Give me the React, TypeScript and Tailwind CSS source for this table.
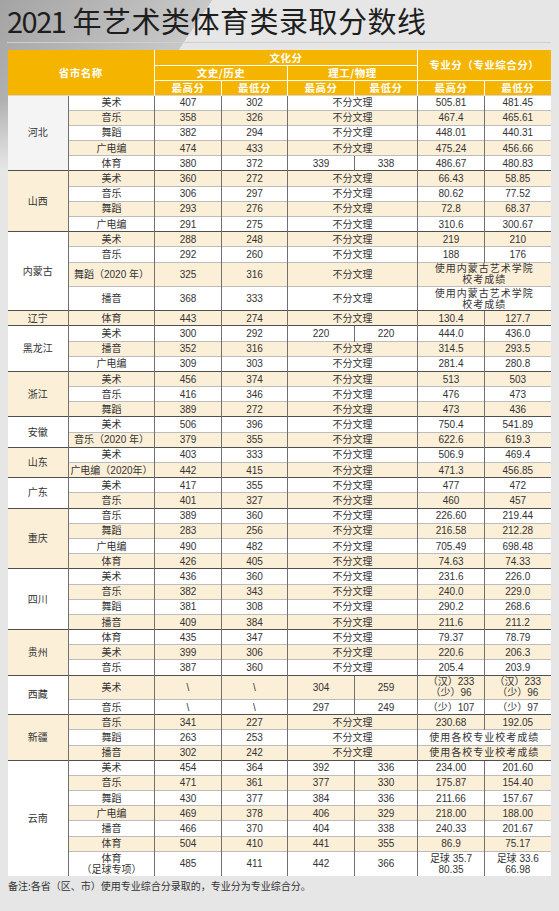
type Row = [string, string, string, string | null, string | null, string, string | null];
type Group = { p: string; rows: Row[] };

const groups: Group[] = [
  {
    p: "河北",
    rows: [
      ["美术", "407", "302", null, null, "505.81", "481.45"],
      ["音乐", "358", "326", null, null, "467.4", "465.61"],
      ["舞蹈", "382", "294", null, null, "448.01", "440.31"],
      ["广电编", "474", "433", null, null, "475.24", "456.66"],
      ["体育", "380", "372", "339", "338", "486.67", "480.83"],
    ],
  },
  {
    p: "山西",
    rows: [
      ["美术", "360", "272", null, null, "66.43", "58.85"],
      ["音乐", "306", "297", null, null, "80.62", "77.52"],
      ["舞蹈", "293", "276", null, null, "72.8", "68.37"],
      ["广电编", "291", "275", null, null, "310.6", "300.67"],
    ],
  },
  {
    p: "内蒙古",
    rows: [
      ["美术", "288", "248", null, null, "219", "210"],
      ["音乐", "292", "260", null, null, "188", "176"],
      ["舞蹈（2020 年）", "325", "316", null, null, "使用内蒙古艺术学院\n校考成绩", null],
      ["播音", "368", "333", null, null, "使用内蒙古艺术学院\n校考成绩", null],
    ],
  },
  { p: "辽宁", rows: [["体育", "443", "274", null, null, "130.4", "127.7"]] },
  {
    p: "黑龙江",
    rows: [
      ["美术", "300", "292", "220", "220", "444.0", "436.0"],
      ["播音", "352", "316", null, null, "314.5", "293.5"],
      ["广电编", "309", "303", null, null, "281.4", "280.8"],
    ],
  },
  {
    p: "浙江",
    rows: [
      ["美术", "456", "374", null, null, "513", "503"],
      ["音乐", "416", "346", null, null, "476", "473"],
      ["舞蹈", "389", "272", null, null, "473", "436"],
    ],
  },
  {
    p: "安徽",
    rows: [
      ["美术", "506", "396", null, null, "750.4", "541.89"],
      ["音乐（2020 年）", "379", "355", null, null, "622.6", "619.3"],
    ],
  },
  {
    p: "山东",
    rows: [
      ["美术", "403", "333", null, null, "506.9", "469.4"],
      ["广电编（2020年）", "442", "415", null, null, "471.3", "456.85"],
    ],
  },
  {
    p: "广东",
    rows: [
      ["美术", "417", "355", null, null, "477", "472"],
      ["音乐", "401", "327", null, null, "460", "457"],
    ],
  },
  {
    p: "重庆",
    rows: [
      ["音乐", "389", "360", null, null, "226.60", "219.44"],
      ["舞蹈", "283", "256", null, null, "216.58", "212.28"],
      ["广电编", "490", "482", null, null, "705.49", "698.48"],
      ["体育", "426", "405", null, null, "74.63", "74.33"],
    ],
  },
  {
    p: "四川",
    rows: [
      ["美术", "436", "360", null, null, "231.6", "226.0"],
      ["音乐", "382", "343", null, null, "240.0", "229.0"],
      ["舞蹈", "381", "308", null, null, "290.2", "268.6"],
      ["播音", "409", "384", null, null, "211.6", "211.2"],
    ],
  },
  {
    p: "贵州",
    rows: [
      ["体育", "435", "347", null, null, "79.37", "78.79"],
      ["美术", "399", "306", null, null, "220.6", "206.3"],
      ["音乐", "387", "360", null, null, "205.4", "203.9"],
    ],
  },
  {
    p: "西藏",
    rows: [
      ["美术", "\\", "\\", "304", "259", "（汉）233\n（少）96", "（汉）233\n（少）96"],
      ["音乐", "\\", "\\", "297", "249", "（少）107", "（少）97"],
    ],
  },
  {
    p: "新疆",
    rows: [
      ["音乐", "341", "227", null, null, "230.68", "192.05"],
      ["舞蹈", "263", "253", null, null, "使用各校专业校考成绩", null],
      ["播音", "302", "242", null, null, "使用各校专业校考成绩", null],
    ],
  },
  {
    p: "云南",
    rows: [
      ["美术", "454", "364", "392", "336", "234.00", "201.60"],
      ["音乐", "471", "361", "377", "330", "175.87", "154.40"],
      ["舞蹈", "430", "377", "384", "336", "211.66", "157.67"],
      ["广电编", "469", "378", "406", "329", "218.00", "188.00"],
      ["播音", "466", "370", "404", "338", "240.33", "201.67"],
      ["体育", "504", "410", "441", "355", "86.9", "75.17"],
      ["体育\n（足球专项）", "485", "411", "442", "366", "足球 35.7\n80.35", "足球 33.6\n66.98"],
    ],
  },
];

const App = () => {
  let idx = 0;

  const body = groups.flatMap((g, gi) =>
    g.rows.map((r, ri) => {
      const i = idx++;
      const tall = r.some((c) => c !== null && c.includes("\n"));
      const rowBg = i % 2 ? "bg-[#fcefd8]" : "bg-white";
      const top =
        ri === 0 ? (gi === 0 ? "border-t-[#d6d6d6]" : "border-t-[#4f4f4f]") : "border-t-[#bcbcbc]";
      const cell = `border-t border-l border-l-[#707070] ${top}`;
      const [sub, a, b, c, d, e, f] = r;

      return (
        <tr key={`${gi}-${ri}`} className={cn(tall ? "h-[24.3px]" : "h-[15.2px]", rowBg)}>
          {ri === 0 && (
            <td
              rowSpan={g.rows.length}
              className={cn(
                "border-t",
                top,
                gi % 2 ? "bg-[#fcefd8]" : gi === 0 ? "bg-[#f4f4f4]" : "bg-white"
              )}
            >
              {g.p}
            </td>
          )}
          <td className={cn(cell, "whitespace-pre-line")}>{sub}</td>
          <td className={cell}>{a}</td>
          <td className={cell}>{b}</td>
          {c === null ? (
            <td colSpan={2} className={cell}>
              不分文理
            </td>
          ) : (
            <>
              <td className={cell}>{c}</td>
              <td className={cell}>{d}</td>
            </>
          )}
          {f === null ? (
            <td colSpan={2} className={cn(cell, "whitespace-pre-line tracking-[1px]")}>
              {e}
            </td>
          ) : (
            <>
              <td className={cn(cell, "whitespace-pre-line")}>{e}</td>
              <td className={cn(cell, "whitespace-pre-line")}>{f}</td>
            </>
          )}
        </tr>
      );
    })
  );

  return (
    <div className="w-[559px] h-[911px] overflow-hidden bg-[#e6e6e6] bg-[linear-gradient(to_bottom,transparent_100px,#e6e6e6_170px),linear-gradient(124deg,#a4a4a4_0px,#c8c8c8_176px,#e6e6e6_176px)]">
      {/* Title */}
      <div className="ml-[7px] w-[544px] h-[43px] border-b border-[#cfcfcf]">
        <h1 className="font-['Noto_Sans_CJK_SC',sans-serif] text-[29px] leading-[41px] font-normal text-[#1e1e1e] tracking-[0.5px]">
          <span className="tracking-[-1.5px]">2021</span> 年艺术类体育类录取分数线
        </h1>
      </div>

      {/* Table */}
      <table className="ml-[7.5px] mt-[7px] w-[543px] table-fixed border-collapse text-center text-[10px] leading-[11px] text-[#333] font-['Liberation_Sans','Noto_Sans_CJK_SC',sans-serif]">
        <colgroup>
          <col className="w-[61px]" />
          <col className="w-[86px]" />
          <col className="w-[67px]" />
          <col className="w-[66px]" />
          <col className="w-[67px]" />
          <col className="w-[63px]" />
          <col className="w-[67px]" />
          <col className="w-[66px]" />
        </colgroup>
        <thead className="bg-[#f5b400] text-white font-bold text-[10.5px] font-['Noto_Sans_CJK_SC',sans-serif] tracking-[0.5px]">
          <tr className="h-[15px]">
            <th rowSpan={3} colSpan={2} className="font-bold">
              省市名称
            </th>
            <th colSpan={4} className="border-l border-white font-bold">
              文化分
            </th>
            <th rowSpan={2} colSpan={2} className="border-l border-white font-bold">
              专业分（专业综合分）
            </th>
          </tr>
          <tr className="h-[15px]">
            <th colSpan={2} className="border-l border-t border-white font-bold">
              文史/历史
            </th>
            <th colSpan={2} className="border-l border-t border-white font-bold">
              理工/物理
            </th>
          </tr>
          <tr className="h-[15px]">
            {["最高分", "最低分", "最高分", "最低分", "最高分", "最低分"].map((h, k) => (
              <th key={k} className="border-l border-t border-white font-bold">
                {h}
              </th>
            ))}
          </tr>
        </thead>
        <tbody>{body}</tbody>
      </table>

      {/* Note */}
      <p className="ml-[8px] mt-[4px] text-[10px] leading-[12px] text-[#333] font-['Noto_Sans_CJK_SC',sans-serif]">
        备注:各省（区、市）使用专业综合分录取的，专业分为专业综合分。
      </p>
    </div>
  );
};

function cn(...parts: (string | false | undefined)[]) {
  return parts.filter(Boolean).join(" ");
}

export default App;
